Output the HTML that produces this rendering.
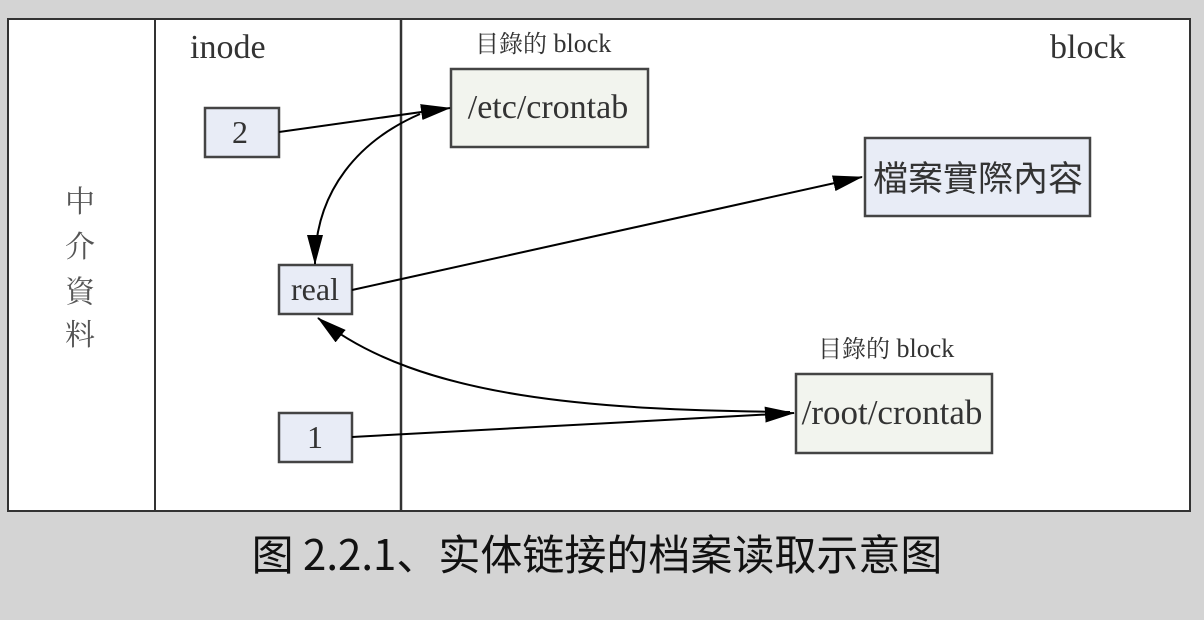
<!DOCTYPE html>
<html><head><meta charset="utf-8"><style>
html,body{margin:0;padding:0;background:#d4d4d4;width:1204px;height:620px;overflow:hidden}
svg{position:absolute;left:0;top:0}
.cap{position:absolute;left:0;width:1204px;top:522px;text-align:center;font:42px "Noto Sans CJK SC","Liberation Sans",sans-serif;color:#111;padding-right:10px;box-sizing:border-box}
</style></head><body>
<svg width="1204" height="620" viewBox="0 0 1204 620">
<defs><marker id="b" markerWidth="30" markerHeight="16" refX="29" refY="8" orient="auto" markerUnits="userSpaceOnUse"><path d="M0,0 L30,8 L0,16z" fill="#000"/></marker></defs>
<rect x="8" y="19" width="1182" height="492" fill="#fff" stroke="#333" stroke-width="2"/>
<line x1="155" y1="19" x2="155" y2="511" stroke="#333" stroke-width="2"/>
<line x1="401" y1="19" x2="401" y2="511" stroke="#333" stroke-width="2.5"/>
<g font-family="Liberation Serif,serif" fill="#333">
<text x="190" y="58" font-size="34">inode</text>
<text x="1050" y="58" font-size="34">block</text>
<text x="475" y="52" font-size="26"><tspan font-family="Noto Serif CJK SC,serif" font-size="24">目錄的</tspan> block</text>
<text x="818" y="357" font-size="26"><tspan font-family="Noto Serif CJK SC,serif" font-size="24">目錄的</tspan> block</text>
</g>
<g font-family="Noto Serif CJK SC,serif" font-size="30" fill="#555" text-anchor="middle">
<text x="80" y="212">中</text><text x="80" y="257">介</text><text x="80" y="302">資</text><text x="80" y="345">料</text>
</g>
<g stroke="#444" stroke-width="2.5">
<rect x="205" y="108" width="74" height="49" fill="#e8ecf6"/>
<rect x="279" y="265" width="73" height="49" fill="#e8ecf6"/>
<rect x="279" y="413" width="73" height="49" fill="#e8ecf6"/>
<rect x="451" y="69" width="197" height="78" fill="#f2f4ee"/>
<rect x="865" y="138" width="225" height="78" fill="#e8ecf6"/>
<rect x="796" y="374" width="196" height="79" fill="#f2f4ee"/>
</g>
<g font-family="Liberation Serif,serif" fill="#333" text-anchor="middle">
<text x="240" y="143" font-size="32">2</text>
<text x="315" y="300" font-size="32">real</text>
<text x="315" y="448" font-size="32">1</text>
<text x="548" y="118" font-size="34">/etc/crontab</text>
<text x="892" y="424" font-size="35">/root/crontab</text>
</g>
<text x="978" y="191" text-anchor="middle" font-family="Noto Sans CJK TC,sans-serif" font-size="35" fill="#333">檔案實際內容</text>
<g stroke="#000" stroke-width="2" fill="none">
<path d="M279,132 L450,108" marker-end="url(#b)"/>
<path d="M420,114 C360,140 315,190 315,264" marker-end="url(#b)"/>
<path d="M352,290 L862,177" marker-end="url(#b)"/>
<path d="M352,437 L794,413" marker-end="url(#b)"/>
<path d="M790,412 C600,410 420,400 318,318" marker-end="url(#b)"/>
</g>
</svg>
<div class="cap">图 2.2.1、实体链接的档案读取示意图</div>
</body></html>
